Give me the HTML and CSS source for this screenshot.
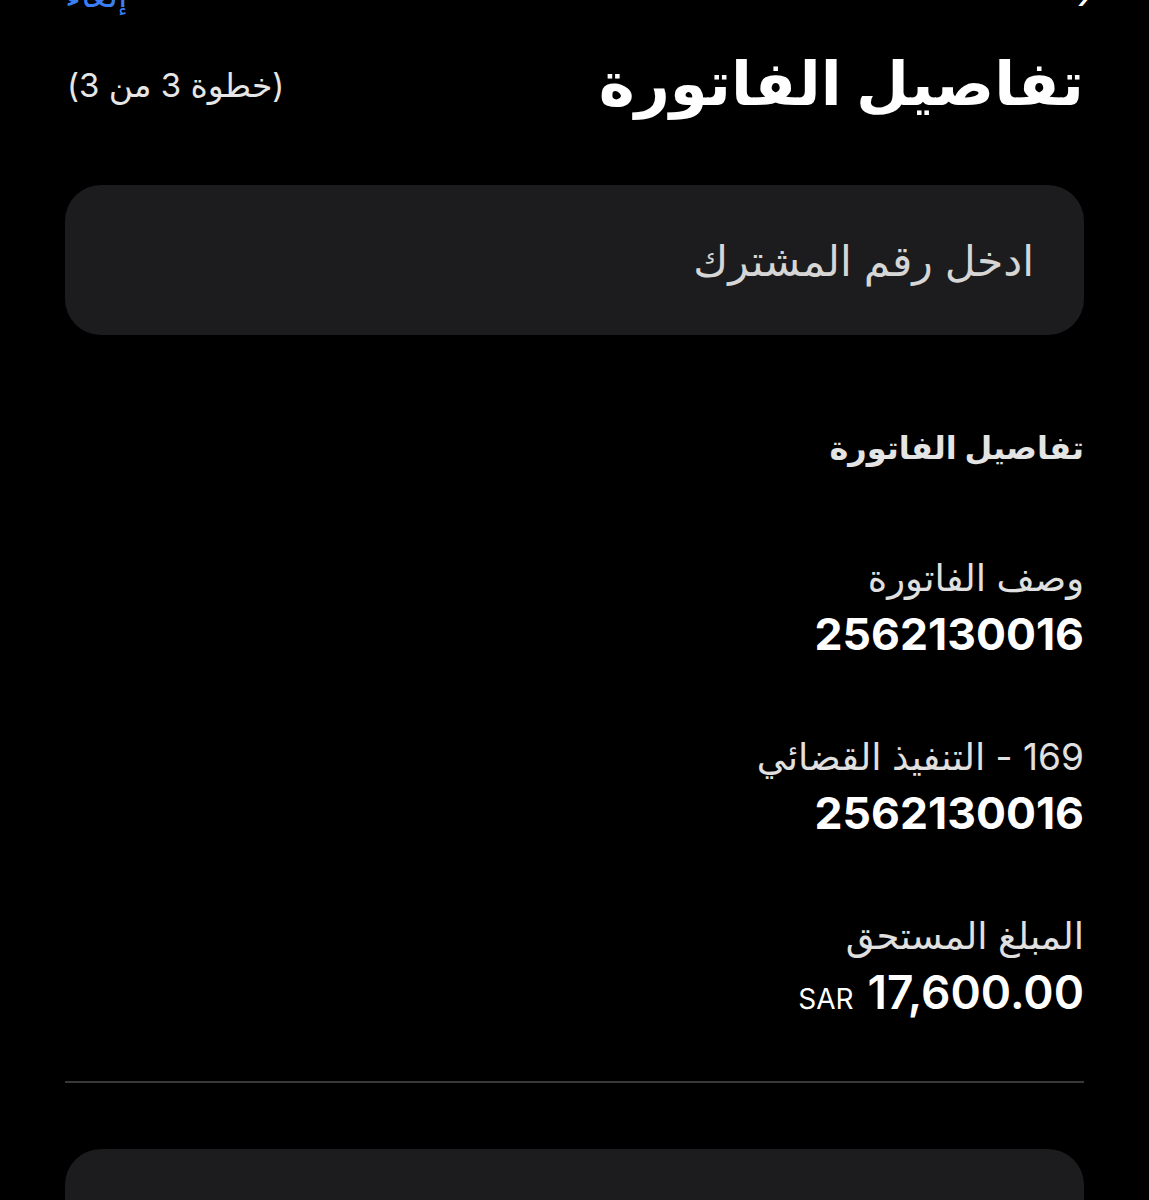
FILE: index.html
```html
<!DOCTYPE html>
<html lang="ar" dir="rtl">
<head>
<meta charset="utf-8">
<title>تفاصيل الفاتورة</title>
<link rel="stylesheet" href="styles.css">
</head>
<body>
<div class="page">
  <div class="nav">
    <span class="nav-back">‹</span>
    <span class="nav-cancel">إلغاء</span>
  </div>
  <div class="header">
    <h1 class="title">تفاصيل الفاتورة</h1>
    <span class="step">(خطوة 3 من 3)</span>
  </div>
  <div class="input-box">
    <span class="placeholder">ادخل رقم المشترك</span>
  </div>
  <h2 class="section-title">تفاصيل الفاتورة</h2>
  <div class="field">
    <div class="label">وصف الفاتورة</div>
    <div class="value">2562130016</div>
  </div>
  <div class="field">
    <div class="label">169 - التنفيذ القضائي</div>
    <div class="value">2562130016</div>
  </div>
  <div class="field">
    <div class="label">المبلغ المستحق</div>
    <div class="value amount"><span class="num">17,600.00</span> <span class="cur">SAR</span></div>
  </div>
  <div class="divider"></div>
  <div class="bottom-card"></div>
</div>
</body>
</html>
```
FILE: styles.css
```css
html, body {
  margin: 0;
  background: #000;
}
body {
  color: #fff;
  font-family: "Inter", "DejaVu Sans", sans-serif;
  direction: rtl;
}
.page {
  padding: 0 65px;
}
.nav {
  display: flex;
  justify-content: space-between;
  align-items: flex-end;
  height: 30px;
  margin-top: -20px;
}
.nav-back {
  color: #fff;
  font-size: 40px;
  line-height: 30px;
  margin-right: -8px;
}
.nav-cancel {
  color: #3a7ff6;
  font-size: 34px;
  line-height: 30px;
}
.header {
  display: flex;
  justify-content: space-between;
  align-items: center;
  margin-top: 33px;
}
.title {
  margin: 0;
  font-size: 61px;
  font-weight: 700;
  line-height: 80px;
}
.step {
  font-size: 33px;
  color: #e6e6e6;
  margin-left: 2px;
  margin-top: 4px;
}
.input-box {
  margin-top: 62px;
  height: 150px;
  border-radius: 36px;
  background: #1c1c1e;
  display: flex;
  align-items: center;
  padding: 0 50px;
}
.placeholder {
  font-size: 42.5px;
  color: #d6d6d6;
}
.section-title {
  margin: 88px 0 0;
  font-size: 32px;
  font-weight: 700;
  color: #e4e4e4;
  line-height: 50px;
}
.field {
  margin-top: 76px;
}
.field + .field {
  margin-top: 66px;
}
.label {
  font-size: 37px;
  color: #e0e0e0;
  line-height: 58px;
}
.value {
  font-size: 44.5px;
  font-weight: 700;
  line-height: 55px;
}
.amount {
  display: flex;
  align-items: baseline;
  gap: 14px;
}
.amount .num {
  font-size: 46px;
  font-weight: 600;
}
.amount .cur {
  font-size: 28px;
  font-weight: 400;
}
.divider {
  margin-top: 54px;
  height: 2px;
  background: #38383a;
}
.bottom-card {
  margin-top: 66px;
  height: 150px;
  border-radius: 36px;
  background: #1c1c1e;
}
```
